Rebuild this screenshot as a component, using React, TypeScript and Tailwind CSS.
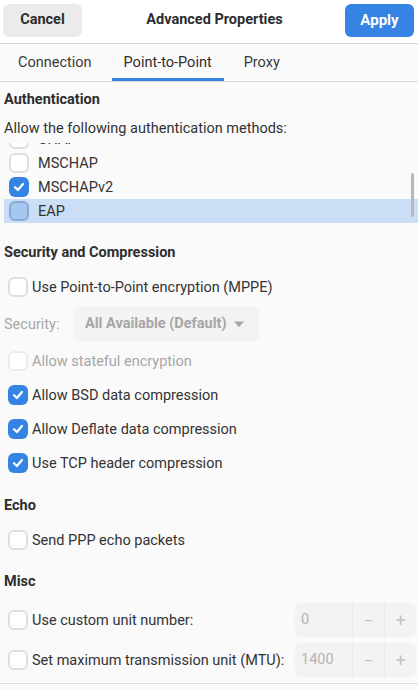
import React from 'react';

const Check = ({ checked = false, disabled = false, selected = false }: { checked?: boolean; disabled?: boolean; selected?: boolean }) => {
    if (checked) {
        return (
            <span className="flex h-[20px] w-[20px] shrink-0 items-center justify-center rounded-[6px] bg-[#3584e4]">
                <svg width="14" height="14" viewBox="0 0 14 14" fill="none">
                    <path d="M3 7.2 L5.9 10 L11 4" stroke="white" strokeWidth="2.2" strokeLinecap="round" strokeLinejoin="round" />
                </svg>
            </span>
        );
    }
    if (selected) {
        return <span className="h-[20px] w-[20px] shrink-0 rounded-[6px] border-2 border-[#86a9d6] bg-[#a6c7ef]" />;
    }
    return (
        <span
            className={`h-[20px] w-[20px] shrink-0 rounded-[6px] border-2 ${disabled ? 'border-[#ececec]' : 'border-[#dedede]'} bg-white`}
        />
    );
};

const Row = ({ label, checked, disabled }: { label: string; checked?: boolean; disabled?: boolean }) => (
    <div className="flex h-[34px] items-center gap-[4px] pl-[4px]">
        <Check checked={checked} disabled={disabled} />
        <span className={`pt-[2px] ${disabled ? 'text-[#a6a6a6]' : 'text-[#333333]'}`}>{label}</span>
    </div>
);

const Heading = ({ children }: { children: React.ReactNode }) => (
    <div className="flex h-[28px] items-center pt-[2px] font-bold text-[#2e2e2e]">{children}</div>
);

const Spin = ({ value }: { value: string }) => (
    <div className="ml-auto flex h-[34px] w-[122px] items-stretch rounded-[6px] bg-[#f3f3f3] text-[#b4b4b4]">
        <div className="flex flex-1 items-center pl-[7px]">{value}</div>
        <div className="flex w-[32px] items-center justify-center border-l border-[#ebebeb] text-[18px] text-[#c4c4c4]">−</div>
        <div className="flex w-[32px] items-center justify-center border-l border-[#ebebeb] text-[18px] text-[#c4c4c4]">+</div>
    </div>
);

const methods = [
    { name: 'CHAP', checked: false },
    { name: 'MSCHAP', checked: false },
    { name: 'MSCHAPv2', checked: true },
    { name: 'EAP', checked: false, selected: true },
];

export default function App() {
    return (
        <div
            className="flex h-[690px] w-[418px] flex-col overflow-hidden bg-[#fafafa] text-[14.5px] text-[#333333]"
            style={{ fontFamily: 'Roboto, "Noto Sans", sans-serif' }}
        >
            {/* header bar */}
            <div className="flex h-[44px] shrink-0 items-center justify-between border-b border-[#d6d6d6] bg-white px-[3px] pb-[3px]">
                <button className="h-[33px] w-[79px] rounded-[6px] bg-[#ebebeb] font-bold text-[#2e2e2e]">Cancel</button>
                <div className="pl-[2px] font-bold text-[#2e2e2e]">Advanced Properties</div>
                <button className="mr-[1px] h-[33px] w-[69px] rounded-[6px] bg-[#3584e4] text-[15px] font-bold text-white">Apply</button>
            </div>

            {/* tabs */}
            <div className="flex h-[38px] shrink-0 items-stretch border-b border-[#dcdcdc] bg-[#fafafa] px-[6px]">
                <div className="flex items-center px-[12px] pt-[1px] text-[#3a3a3a]">Connection</div>
                <div className="relative mx-[8px] flex items-center px-[12px] pt-[1px] text-[#2e2e2e]">
                    Point-to-Point
                    <span className="absolute bottom-0 left-0 right-0 h-[3px] bg-[#3584e4]" />
                </div>
                <div className="flex items-center px-[12px] pt-[1px] text-[#3a3a3a]">Proxy</div>
            </div>

            <div className="flex flex-1 flex-col pl-[4px] pr-[2px] pt-[3px]">
                <Heading>Authentication</Heading>
                <div className="flex h-[30px] items-center pt-[2px]">Allow the following authentication methods:</div>
                <div className="relative -ml-[4px] -mr-[2px] h-[81px] shrink-0 overflow-hidden">
                    <div className="-mt-[16px] pl-[4px]">
                        {methods.map((m) => (
                            <div
                                key={m.name}
                                className={`flex h-[24px] items-center gap-[9px] pl-[5px] ${m.selected ? 'bg-[#cadff6]' : ''}`}
                            >
                                <Check checked={m.checked} selected={m.selected} />
                                <span className="pt-[2px]">{m.name}</span>
                            </div>
                        ))}
                    </div>
                    <span className="absolute right-[4px] top-[30px] h-[44px] w-[3px] rounded-full bg-[#b8b8b8]" />
                </div>

                <div className="mt-[14px]">
                    <Heading>Security and Compression</Heading>
                </div>
                <div className="mt-[4px]">
                    <Row label="Use Point-to-Point encryption (MPPE)" />
                </div>
                <div className="flex h-[40px] items-center">
                    <span className="w-[69px] pt-[1px] text-[#a6a6a6]">Security:</span>
                    <div className="flex h-[34px] w-[186px] items-center gap-[6px] rounded-[6px] bg-[#f3f3f3] pl-[12px] font-bold text-[#a6a6a6]">
                        All Available (Default)
                        <svg width="12" height="8" viewBox="0 0 12 8">
                            <path d="M1 1.5 L11 1.5 L6 7 Z" fill="#a6a6a6" />
                        </svg>
                    </div>
                </div>
                <Row label="Allow stateful encryption" disabled />
                <Row label="Allow BSD data compression" checked />
                <Row label="Allow Deflate data compression" checked />
                <Row label="Use TCP header compression" checked />

                <div className="mt-[11px]">
                    <Heading>Echo</Heading>
                </div>
                <div className="mt-[4px]">
                    <Row label="Send PPP echo packets" />
                </div>

                <div className="mt-[10px]">
                    <Heading>Misc</Heading>
                </div>
                <div className="mt-[5px] flex h-[40px] items-center">
                    <Row label="Use custom unit number:" />
                    <Spin value="0" />
                </div>
                <div className="flex h-[40px] items-center">
                    <Row label="Set maximum transmission unit (MTU):" />
                    <Spin value="1400" />
                </div>
            </div>
            <div className="h-[7px] shrink-0 border-t border-[#dcdcdc] bg-[#fafafa]" />
        </div>
    );
}
